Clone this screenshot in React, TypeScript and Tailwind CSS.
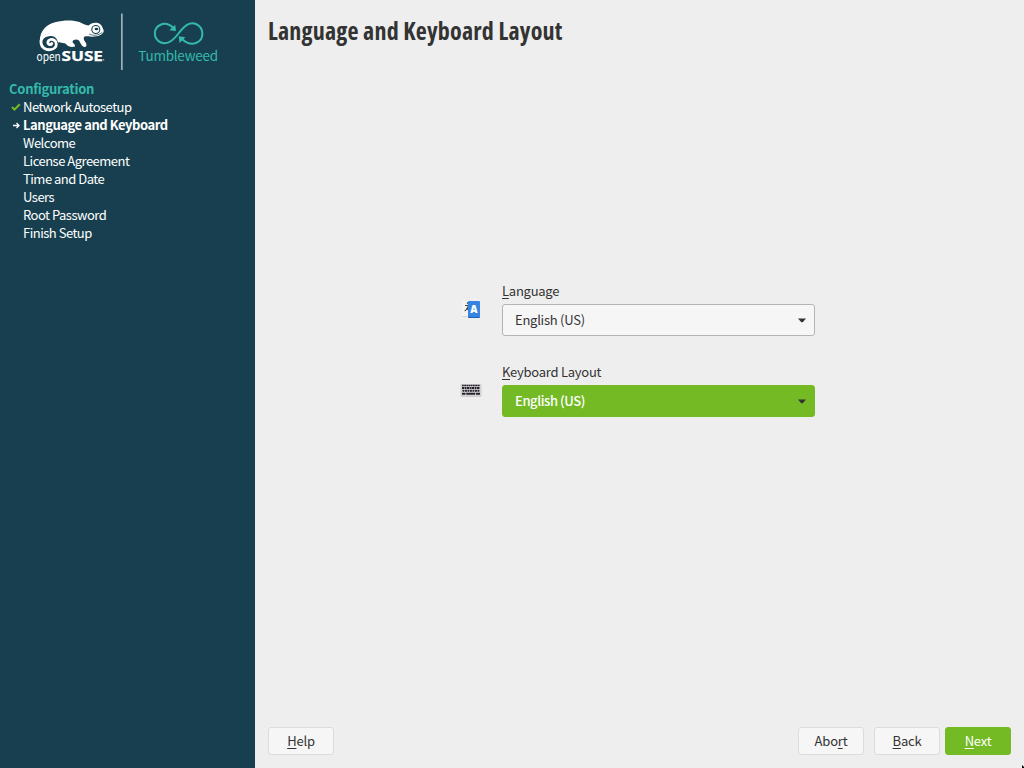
import React from "react";

const steps = [
  { label: "Network Autosetup", state: "done" },
  { label: "Language and Keyboard", state: "current" },
  { label: "Welcome", state: "todo" },
  { label: "License Agreement", state: "todo" },
  { label: "Time and Date", state: "todo" },
  { label: "Users", state: "todo" },
  { label: "Root Password", state: "todo" },
  { label: "Finish Setup", state: "todo" },
];

function Logo() {
  return (
    <svg width="255" height="80" viewBox="0 0 255 80" className="block shrink-0">
      <path
        fill="#fff"
        d="M39.800 41C40 31 46 24.500 55 22.300C64 19.800 74 20 79.500 22C83 23.500 85 25.200 88.500 25.500L91 23.800C94 22 98 22.500 100 24C102 25.500 102.700 28 103.800 31C103 35 98 36.700 92 36.700C88 36.700 85 35.700 84 37C83 39 84.500 41 86 43C87 45 86.500 47.500 84 47C81 45.500 80.500 42.500 79 40.500C77 38.500 73 39.500 72.500 41.500C72.500 43.500 75.500 44 75 46.500C71 47.500 67.500 46.500 65.500 43.500L60 42.500C58 37 54 34 49 34C44 34 41 37 39.800 42Z"
      />
      <circle cx="49.500" cy="42" r="8.300" fill="#173f4f" />
      <path
        d="M59 41C57.500 36 53 34.300 48.500 34.800C43.500 35.500 40.500 39 41 43C41.500 47.500 45.500 50 50 49.700C54 49.300 56.500 47 56.300 43.800C56 40.500 53 39 50.500 39.500C47.500 40.200 47 43.500 49.300 44.500C50.500 45 51.500 44.500 51.800 43.500"
        fill="none"
        stroke="#fff"
        strokeWidth="2.800"
        strokeLinecap="round"
      />
      <circle cx="95.800" cy="29.500" r="4" fill="#fff" stroke="#173f4f" strokeWidth="1.100" />
      <ellipse cx="96.500" cy="29" rx="1.900" ry="1.300" fill="#173f4f" />
      <path d="M89 34C94 36.300 99 35.300 102.500 32" fill="none" stroke="#173f4f" strokeWidth=".7" />
      <text x="36.500" y="60.500" fill="#fff" fontFamily="Noto Sans CJK SC, sans-serif" fontSize="12" textLength="24.200" lengthAdjust="spacingAndGlyphs">open</text>
      <text x="61.500" y="60.500" fill="#fff" stroke="#fff" strokeWidth=".25" fontFamily="Open Sans, sans-serif" fontWeight="700" fontSize="14" textLength="41.500" lengthAdjust="spacingAndGlyphs">SUSE</text>
      <circle cx="103.700" cy="59.800" r=".6" fill="#fff" />
      <rect x="121" y="13.500" width="1.700" height="56.500" fill="#9cb0b9" />
      <g fill="none" stroke="#35b9ab" strokeWidth="2">
        <path d="M173 27.500C169.500 24 164.500 22.800 161 24.500C152.500 28 153 39 161 42.500C167 45 172.500 41.500 178.500 33.500C185 25 190 21.500 196 24C204.500 28 204.500 39.500 196 43C191.500 44.500 186.500 43 182.500 39.500" />
      </g>
      <path d="M176 31L169.300 30.300L175.200 24.800Z M178.700 36.300L185.500 37.300L179.500 43Z" fill="#35b9ab" />
      <text x="138.300" y="61.200" fill="#35b9ab" fontFamily="Noto Sans CJK SC, sans-serif" fontSize="13.500" textLength="79.700" lengthAdjust="spacing">Tumbleweed</text>
    </svg>
  );
}

function Mnemonic({ text, at = 0 }: { text: string; at?: number }) {
  return (
    <span className="whitespace-pre">
      {text.slice(0, at)}
      <span className="underline decoration-1 underline-offset-2 [text-decoration-skip-ink:none]">{text[at]}</span>
      {text.slice(at + 1)}
    </span>
  );
}

function Arrow() {
  return (
    <svg width="8" height="5" viewBox="0 0 8 5" className="mr-[8px]">
      <path d="M0 .5H8L4.700 4.300H3.300Z" fill="#333" />
    </svg>
  );
}

function LanguageIcon() {
  return (
    <svg width="22" height="22" viewBox="0 0 22 22" className="mt-[17px] block">
      <rect x="2" y="3" width="13" height="16" rx="1" fill="#f4f4f3" />
      <path d="M2.500 18.500H9" stroke="#d4d4d4" />
      <path d="M7 4.500L8.500 6M5 7.500H8M8.500 7.500C8 10 6.500 12 4.700 13M6.500 10L8 11.500" stroke="#444" strokeWidth="1.200" fill="none" />
      <rect x="8" y="3" width="12" height="17" rx="1" fill="#3584e4" />
      <path d="M8.500 19.500H19.500" stroke="#1c62b6" />
      <text x="14" y="15" textAnchor="middle" fill="#fff" fontFamily="Open Sans, sans-serif" fontSize="10" fontWeight="800">A</text>
    </svg>
  );
}

function KeyboardIcon() {
  return (
    <svg width="22" height="22" viewBox="0 0 22 22" className="mt-[18px] block">
      <rect x=".5" y="4" width="21" height="13" rx="1.500" fill="#cfcdca" />
      <rect x="1.500" y="4.500" width="19" height="11" fill="#dedbd8" />
      <g stroke="#252130" fill="none">
        <path d="M2 5.500H20" strokeWidth="1.500" strokeDasharray="1.800 .4" />
        <path d="M2 8H20" strokeWidth="2" strokeDasharray="2 .5" />
        <path d="M2.500 10.800H20" strokeWidth="2" strokeDasharray="1.900 .6" />
        <path d="M2 13.800H5.500M6.200 13.800H15.300M16 13.800H20" strokeWidth="2" />
      </g>
    </svg>
  );
}

function Field({ label, active, icon }: { label: string; active?: boolean; icon: React.ReactNode }) {
  return (
    <div className="flex h-[55px]">
      <div className="w-[42px] shrink-0">{icon}</div>
      <div className="w-[313px]">
        <div className={"h-[23px] leading-[20px] " + (active ? "tracking-[-0.25px]" : "tracking-[-0.25px]")}>
          <Mnemonic text={label} />
        </div>
        <div
          className={
            "flex h-[32px] items-center justify-between rounded-[3px] border px-[12px] pr-0 " +
            (active ? "border-[#73ba25] bg-[#73ba25] font-medium tracking-[-0.4px] text-white" : "border-[#b3b3b3] bg-[#f6f6f6] tracking-[-0.25px]")
          }
        >
          <span>English (US)</span>
          <Arrow />
        </div>
      </div>
    </div>
  );
}

function Button({ text, at, primary }: { text: string; at?: number; primary?: boolean }) {
  return (
    <button
      className={
        "flex h-[28px] w-[66px] items-center justify-center rounded-[3px] border tracking-[-0.2px] " +
        (primary ? "border-[#73ba25] bg-[#73ba25] text-white" : "border-[#dcdcdc] bg-[#f6f6f6]")
      }
    >
      <Mnemonic text={text} at={at} />
    </button>
  );
}

export default function App() {
  return (
    <div className="flex h-[768px] w-[1024px] overflow-hidden bg-[#eeeeee] font-['Noto_Sans_CJK_SC',sans-serif] text-[13px] text-[#333]">
      <aside className="flex w-[255px] shrink-0 flex-col bg-[#173f4f] leading-[18px] text-white">
        <Logo />
        <div className="pl-[9px] font-bold tracking-[-0.25px] text-[#35b9ab]">Configuration</div>
        <ul>
          {steps.map((s) => (
            <li
              key={s.label}
              className={"flex h-[18px] items-center whitespace-nowrap " + (s.state === "current" ? "font-bold tracking-[-0.45px]" : "tracking-[-0.5px]")}
            >
              <span className="flex w-[23px] shrink-0 pl-[11px]">
                {s.state === "done" && (
                  <svg width="10" height="9" viewBox="0 0 10 9">
                    <path d="M1 4L3.500 6.500L8.800 1.300" fill="none" stroke="#73ba25" strokeWidth="2" />
                  </svg>
                )}
                {s.state === "current" && (
                  <svg width="10" height="9" viewBox="0 0 10 9">
                    <path d="M2 4.500H8M5.500 2L8 4.500L5.500 7" fill="none" stroke="#fff" strokeWidth="1.300" />
                  </svg>
                )}
              </span>
              <span>{s.label}</span>
            </li>
          ))}
        </ul>
      </aside>
      <main className="flex grow flex-col px-[13px] pb-[13px]">
        <h1 className="mt-[14px] h-[34px] whitespace-nowrap font-['Open_Sans'] text-[24px] leading-[34px] font-bold tracking-[0.2px] [font-stretch:75%]">
          Language and Keyboard Layout
        </h1>
        <section className="mt-[233px] ml-[192px] flex flex-col gap-[26px]">
          <Field label="Language" icon={<LanguageIcon />} />
          <Field label="Keyboard Layout" active icon={<KeyboardIcon />} />
        </section>
        <footer className="mt-auto flex">
          <Button text="Help" />
          <div className="ml-auto flex">
            <Button text="Abort" at={3} />
            <div className="ml-[10px]">
              <Button text="Back" />
            </div>
            <div className="ml-[5px]">
              <Button text="Next" primary />
            </div>
          </div>
        </footer>
      </main>
      <svg width="3" height="3" viewBox="0 0 3 3" className="absolute top-[765px] left-[1021px]">
        <path d="M1 0V3H3V2Z" fill="#000" />
      </svg>
    </div>
  );
}
